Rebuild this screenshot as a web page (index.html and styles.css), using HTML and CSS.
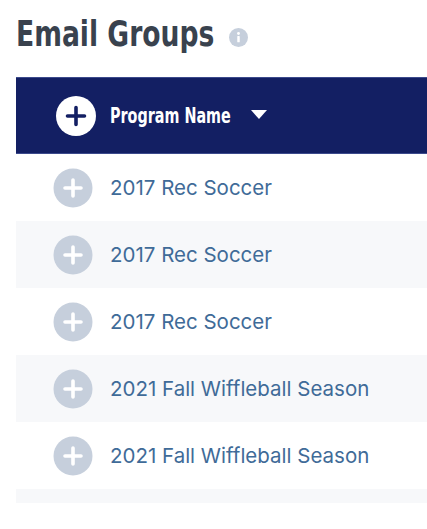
FILE: index.html
```html
<!DOCTYPE html>
<html>
<head>
<meta charset="utf-8">
<link rel="stylesheet" href="styles.css">
</head>
<body>
<div class="page">
  <h1 class="title"><span class="title-box"><span class="title-text">Email Groups</span></span>
    <span class="info"><svg viewBox="0 0 20 20" width="19" height="19"><circle cx="10" cy="10" r="10" fill="#c6cfdc"/><rect x="8.7" y="8.5" width="2.6" height="6.5" rx="0.6" fill="#fff"/><circle cx="10" cy="5.8" r="1.5" fill="#fff"/></svg></span>
  </h1>
  <div class="table">
    <div class="head">
      <span class="head-add"><svg viewBox="0 0 40 40" width="40" height="40"><circle cx="20" cy="20" r="20" fill="#fff"/><path d="M20 11.5v17M11.5 20h17" stroke="#131f63" stroke-width="3.6" stroke-linecap="round"/></svg></span>
      <span class="head-box"><span class="head-label">Program Name</span></span>
      <svg class="caret" viewBox="0 0 16 9" width="16" height="9"><path d="M0 0h16L8 9z" fill="#fff"/></svg>
    </div>
    <div class="row"><span class="add"><svg viewBox="0 0 40 40" width="40" height="40"><circle cx="20" cy="20" r="19.5" fill="#c6cfdc"/><path d="M20 12v16M12 20h16" stroke="#fff" stroke-width="3.6" stroke-linecap="round"/></svg></span><span class="name">2017 Rec Soccer</span></div>
    <div class="row alt"><span class="add"><svg viewBox="0 0 40 40" width="40" height="40"><circle cx="20" cy="20" r="19.5" fill="#c6cfdc"/><path d="M20 12v16M12 20h16" stroke="#fff" stroke-width="3.6" stroke-linecap="round"/></svg></span><span class="name">2017 Rec Soccer</span></div>
    <div class="row"><span class="add"><svg viewBox="0 0 40 40" width="40" height="40"><circle cx="20" cy="20" r="19.5" fill="#c6cfdc"/><path d="M20 12v16M12 20h16" stroke="#fff" stroke-width="3.6" stroke-linecap="round"/></svg></span><span class="name">2017 Rec Soccer</span></div>
    <div class="row alt"><span class="add"><svg viewBox="0 0 40 40" width="40" height="40"><circle cx="20" cy="20" r="19.5" fill="#c6cfdc"/><path d="M20 12v16M12 20h16" stroke="#fff" stroke-width="3.6" stroke-linecap="round"/></svg></span><span class="name">2021 Fall Wiffleball Season</span></div>
    <div class="row"><span class="add"><svg viewBox="0 0 40 40" width="40" height="40"><circle cx="20" cy="20" r="19.5" fill="#c6cfdc"/><path d="M20 12v16M12 20h16" stroke="#fff" stroke-width="3.6" stroke-linecap="round"/></svg></span><span class="name">2021 Fall Wiffleball Season</span></div>
    <div class="row alt short"></div>
  </div>
</div>
</body>
</html>
```
FILE: styles.css
```css
html, body {
  margin: 0;
  padding: 0;
  background: #fff;
}
.page {
  padding-left: 16px;
}
.title {
  margin: 0;
  height: 77px;
  display: flex;
  align-items: flex-start;
  padding-top: 10px;
  box-sizing: border-box;
  font-family: "DejaVu Sans", sans-serif;
  font-stretch: condensed;
  font-weight: bold;
  font-size: 35px;
  line-height: 48px;
  color: #39424e;
}
.title-box {
  display: inline-block;
  width: 198px;
  white-space: nowrap;
}
.title-text {
  display: inline-block;
  transform: scaleX(0.845);
  transform-origin: left center;
}
.info {
  display: flex;
  margin-left: 15px;
  margin-top: 18px;
}
.table {
  width: 100%;
}
.head {
  height: 77px;
  box-sizing: border-box;
  background: #131f63;
  border-top: 1px solid #3c4a8c;
  border-bottom: 1px solid #3c4a8c;
  display: flex;
  align-items: center;
  padding-left: 40px;
}
.head-add {
  display: flex;
  width: 40px;
  height: 40px;
}
.head-box {
  display: inline-block;
  width: 120px;
  margin-left: 14px;
  white-space: nowrap;
}
.head-label {
  display: inline-block;
  font-family: "DejaVu Sans", sans-serif;
  font-stretch: condensed;
  font-weight: bold;
  font-size: 22px;
  color: #fff;
  transform: scaleX(0.725);
  transform-origin: left center;
}
.caret {
  margin-left: 21px;
  margin-top: -2px;
}
.row {
  height: 67px;
  display: flex;
  align-items: center;
  padding-left: 37px;
  background: #fff;
}
.row.alt {
  background: #f7f8fa;
}
.row.short {
  height: 14px;
}
.add {
  display: flex;
  width: 40px;
  height: 40px;
}
.name {
  margin-left: 17px;
  font-family: "Inter", sans-serif;
  font-size: 20.5px;
  color: #3f6b98;
  letter-spacing: 0;
}
```
